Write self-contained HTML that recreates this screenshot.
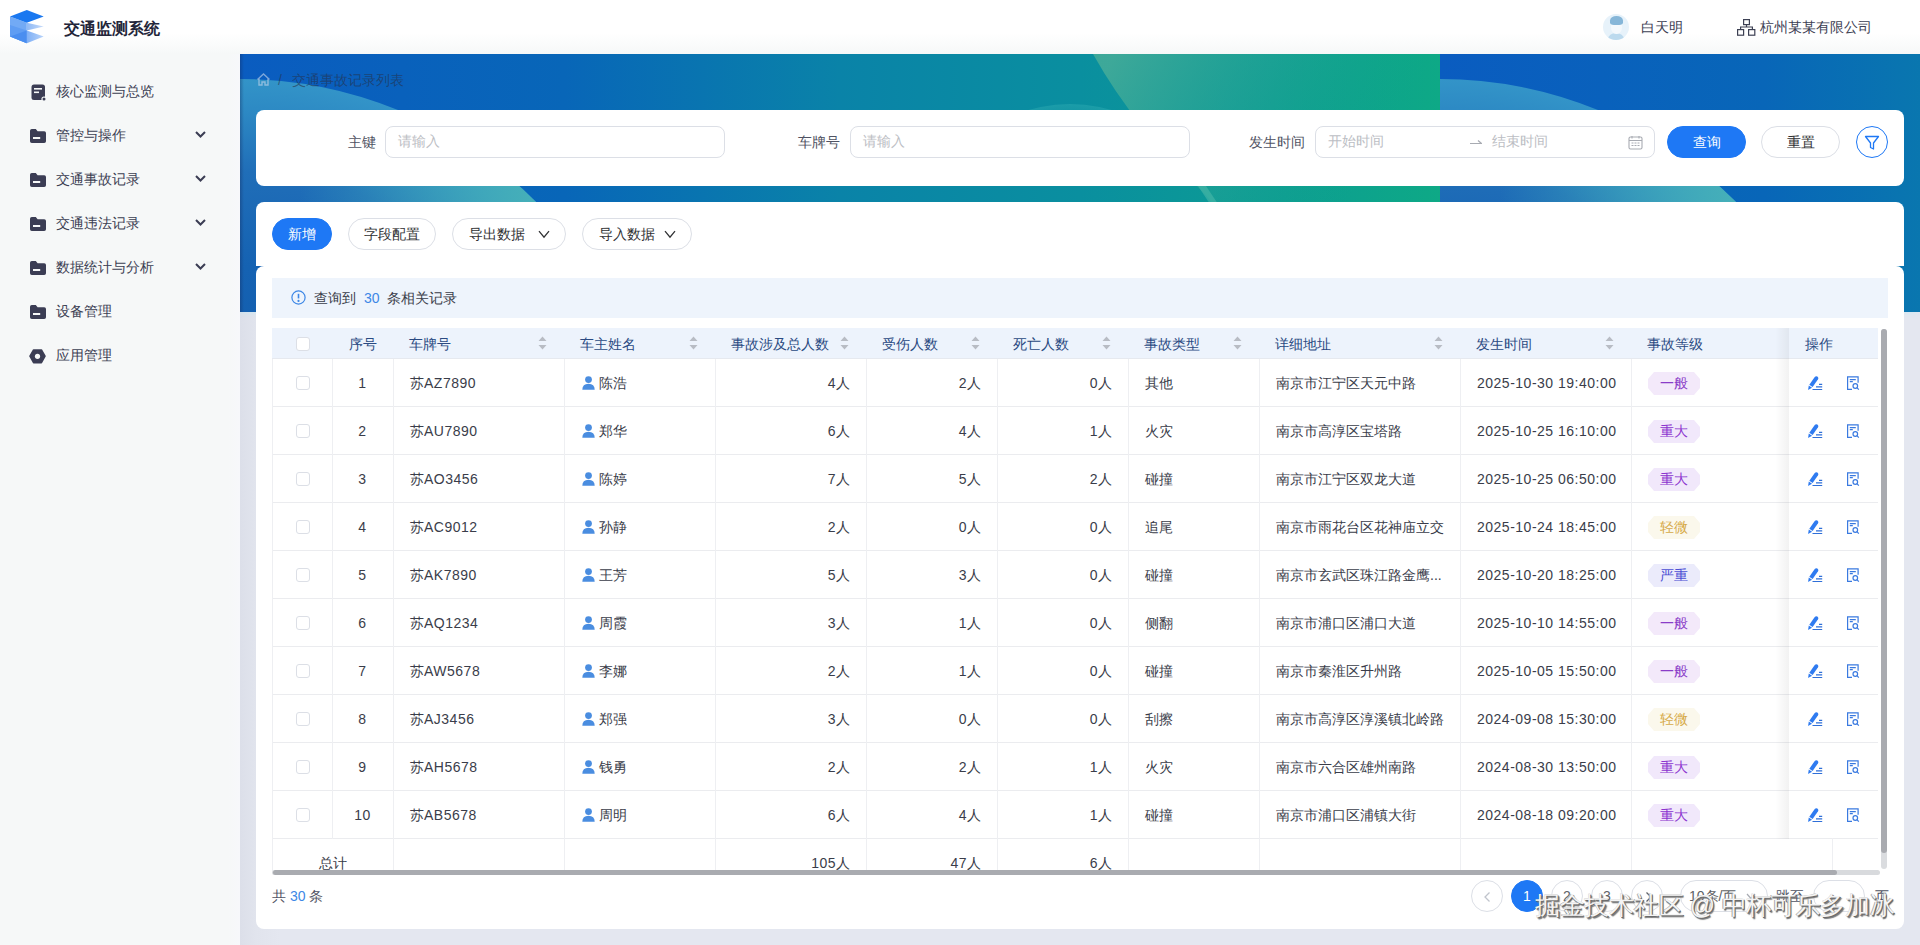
<!DOCTYPE html>
<html><head><meta charset="utf-8">
<style>
*{box-sizing:border-box;margin:0;padding:0}
html,body{width:1920px;height:945px;overflow:hidden}
body{font-family:"Liberation Sans",sans-serif;font-size:14px;color:#303133;background:#e4e8f0;position:relative}
.abs{position:absolute}
/* header */
#hdr{position:absolute;left:0;top:0;width:1920px;height:54px;background:linear-gradient(#fff 0%,#fff 62%,#f6f8f8 100%);z-index:2}
#side{position:absolute;left:0;top:54px;width:240px;height:891px;background:linear-gradient(90deg,#f6f8f8 0,#f6f8f8 228px,#f7f8fb 240px);z-index:1}
.mi{position:absolute;left:0;width:240px;height:44px;color:#3c4053;font-size:14px}
.mi .t{position:absolute;left:56px;top:13px;line-height:18px}
.mi svg.ic{position:absolute;left:30px;top:14px}
.mi svg.ch{position:absolute;left:195px;top:18px}
/* banner */
#banner{position:absolute;left:240px;top:54px;width:1680px;height:258px;overflow:hidden;box-shadow:-3px 0 6px rgba(160,240,255,.35)}
.tile{position:absolute;top:0;width:1200px;height:258px}
.card{position:absolute;background:#fff;border-radius:8px}
.inp{position:absolute;height:32px;border:1px solid #dcdfe6;border-radius:8px;background:#fff;color:#bcbec4;font-size:14px;line-height:29px;padding-left:12px}
.lbl{position:absolute;color:#505363;font-size:14px;line-height:20px;text-align:right}
.btn{position:absolute;height:32px;border-radius:16px;border:1px solid #dcdfe6;background:#fff;color:#303133;font-size:14px;line-height:30px;text-align:center}
.btn.pri{background:#1e78f5;border-color:#1e78f5;color:#fff}
.cb{position:absolute;width:14px;height:14px;border:1px solid #dcdfe6;border-radius:3px;background:#fff}
.th{position:absolute;height:30px;line-height:32px;color:#2a4a82;font-size:14px;white-space:nowrap}
.td{position:absolute;height:48px;line-height:48px;color:#3a3d4a;font-size:14px;white-space:nowrap}
.td.sum{height:32px;line-height:48px}
.rowline{position:absolute;left:272px;width:1608px;height:1px;background:#ebecef}
.vline{position:absolute;width:1px;background:#eeeff2}
.tag{position:absolute;width:52px;height:23px;border-radius:4px;clip-path:polygon(6px 0,46px 0,52px 7px,52px 16px,46px 23px,6px 23px,0 16px,0 7px);font-size:14px;line-height:23px;text-align:center}
.pg{position:absolute;top:880px;width:32px;height:32px;border-radius:16px;border:1px solid #dcdfe6;background:#fff;color:#606266;text-align:center;line-height:30px;font-size:14px}
.wm{font-size:25px;line-height:30px;color:#f4f4f4;white-space:nowrap;text-shadow:1px 1px 0 #6a6a6a,1.5px 1.5px 1px #777,-0.5px -0.5px 0 #aaa}
.n{letter-spacing:.5px}
</style></head><body>
<div id="hdr">
  <svg class="abs" style="left:0;top:0" width="50" height="50" viewBox="0 0 50 50">
    <defs>
    <linearGradient id="lg1" x1="27" y1="0" x2="44" y2="0" gradientUnits="userSpaceOnUse"><stop offset="0" stop-color="#8fbaf6"/><stop offset="1" stop-color="#c9dcf9"/></linearGradient>
    <linearGradient id="lg2" x1="27" y1="0" x2="44" y2="0" gradientUnits="userSpaceOnUse"><stop offset="0" stop-color="#7fb0f6"/><stop offset="1" stop-color="#b8d3fa"/></linearGradient>
    </defs>
    <polygon points="10,16.4 26.8,22.7 26.8,43.2 10,36.4" fill="#72aaf5"/>
    <polygon points="10,25 26.8,30.5 26.8,43.2 10,36.4" fill="#5f9df3"/>
    <polygon points="10,36.4 26.8,30.5 26.8,43.2" fill="#4a8ef0"/>
    <polygon points="26.8,22.7 43.7,26.4 26.8,30.5" fill="url(#lg1)"/>
    <polygon points="26.8,30.5 43.7,36.4 26.8,43.2" fill="url(#lg2)"/>
    <polygon points="10,16.4 26.8,10 43.7,16.4 26.8,22.7" fill="#1a78f0"/>
  </svg>
  <div class="abs" style="left:64px;top:18px;font-size:16px;font-weight:bold;color:#23263a;line-height:22px">交通监测系统</div>
  <div class="abs" style="left:1603px;top:14px;width:26px;height:26px;border-radius:50%;background:#e7f2fa;overflow:hidden">
    <div class="abs" style="left:5px;top:19px;width:16px;height:12px;border-radius:50% 50% 0 0;background:#bcdaee"></div>
    <div class="abs" style="left:8px;top:5px;width:11px;height:15px;border-radius:45%;background:#f3f8fc"></div>
    <div class="abs" style="left:6.5px;top:2px;width:13px;height:9px;border-radius:50% 50% 30% 30%;background:#86b6d8"></div>
  </div>
  <div class="abs" style="left:1641px;top:17px;line-height:20px;color:#3c4053">白天明</div>
  <svg class="abs" style="left:1737px;top:19px" width="19" height="17" viewBox="0 0 19 17" fill="none" stroke="#3c4053" stroke-width="1.2">
    <rect x="6.6" y="0.6" width="5.8" height="5"/><rect x="0.6" y="10.6" width="6" height="5.6"/><rect x="11.6" y="10.6" width="6.2" height="5.6"/>
    <path d="M9.5 5.6v2.4M3.6 10.6V8h11.8v2.6"/>
  </svg>
  <div class="abs" style="left:1760px;top:17px;line-height:20px;color:#3c4053">杭州某某有限公司</div>
</div>

<div id="side">
<div class="mi" style="top:15px"><svg class="ic" style="left:31px;top:15px" width="15" height="17" viewBox="0 0 15 17"><rect x="0.5" y="0.5" width="13.5" height="15.5" rx="2.5" fill="#3b3d54"/><rect x="3" y="4" width="8" height="1.6" fill="#f6f8f8"/><rect x="3" y="7.5" width="5" height="1.6" fill="#f6f8f8"/><circle cx="13" cy="15" r="2.6" fill="#f6f8f8"/><circle cx="13" cy="15" r="1.5" fill="#3b3d54"/></svg><span class="t">核心监测与总览</span></div>
<div class="mi" style="top:59px"><svg class="ic" style="top:16px" width="16" height="14" viewBox="0 0 16 14"><path d="M0 1.8Q0 0 1.8 0H5.8L7.6 2.2H14.2Q16 2.2 16 4V12.2Q16 14 14.2 14H1.8Q0 14 0 12.2Z" fill="#3b3d54"/><rect x="3" y="8" width="7.2" height="2" fill="#f6f8f8"/></svg><span class="t">管控与操作</span><svg class="ch" width="11" height="7" viewBox="0 0 11 7" fill="none" stroke="#3b3d54" stroke-width="2"><path d="M1 1l4.5 4.5L10 1"/></svg></div>
<div class="mi" style="top:103px"><svg class="ic" style="top:16px" width="16" height="14" viewBox="0 0 16 14"><path d="M0 1.8Q0 0 1.8 0H5.8L7.6 2.2H14.2Q16 2.2 16 4V12.2Q16 14 14.2 14H1.8Q0 14 0 12.2Z" fill="#3b3d54"/><rect x="3" y="8" width="7.2" height="2" fill="#f6f8f8"/></svg><span class="t">交通事故记录</span><svg class="ch" width="11" height="7" viewBox="0 0 11 7" fill="none" stroke="#3b3d54" stroke-width="2"><path d="M1 1l4.5 4.5L10 1"/></svg></div>
<div class="mi" style="top:147px"><svg class="ic" style="top:16px" width="16" height="14" viewBox="0 0 16 14"><path d="M0 1.8Q0 0 1.8 0H5.8L7.6 2.2H14.2Q16 2.2 16 4V12.2Q16 14 14.2 14H1.8Q0 14 0 12.2Z" fill="#3b3d54"/><rect x="3" y="8" width="7.2" height="2" fill="#f6f8f8"/></svg><span class="t">交通违法记录</span><svg class="ch" width="11" height="7" viewBox="0 0 11 7" fill="none" stroke="#3b3d54" stroke-width="2"><path d="M1 1l4.5 4.5L10 1"/></svg></div>
<div class="mi" style="top:191px"><svg class="ic" style="top:16px" width="16" height="14" viewBox="0 0 16 14"><path d="M0 1.8Q0 0 1.8 0H5.8L7.6 2.2H14.2Q16 2.2 16 4V12.2Q16 14 14.2 14H1.8Q0 14 0 12.2Z" fill="#3b3d54"/><rect x="3" y="8" width="7.2" height="2" fill="#f6f8f8"/></svg><span class="t">数据统计与分析</span><svg class="ch" width="11" height="7" viewBox="0 0 11 7" fill="none" stroke="#3b3d54" stroke-width="2"><path d="M1 1l4.5 4.5L10 1"/></svg></div>
<div class="mi" style="top:235px"><svg class="ic" style="top:16px" width="16" height="14" viewBox="0 0 16 14"><path d="M0 1.8Q0 0 1.8 0H5.8L7.6 2.2H14.2Q16 2.2 16 4V12.2Q16 14 14.2 14H1.8Q0 14 0 12.2Z" fill="#3b3d54"/><rect x="3" y="8" width="7.2" height="2" fill="#f6f8f8"/></svg><span class="t">设备管理</span></div>
<div class="mi" style="top:279px"><svg class="ic" style="left:29px;top:16px" width="17" height="15" viewBox="0 0 17 15"><path d="M1 7.2L4.6 1H12.4L16 7.2L12.4 13.6H4.6Z" fill="#3b3d54" stroke="#3b3d54" stroke-width="1.6" stroke-linejoin="round"/><circle cx="8.5" cy="7.3" r="2.6" fill="#f6f8f8"/></svg><span class="t">应用管理</span></div>
</div>

<div class="abs" style="left:240px;top:54px;width:1680px;height:891px;background:linear-gradient(90deg,#dcdfe9 0,#e1e4ed 16px,#e4e7f0 40px)"></div>
<div id="banner">
  <div class="tile" style="left:0"><svg class="abs" style="left:0;top:0" width="1200" height="258" viewBox="0 0 1200 258">
<defs>
<linearGradient id="gba" x1="0" y1="0" x2="1200" y2="0" gradientUnits="userSpaceOnUse">
<stop offset="0" stop-color="#0a5cc0"/><stop offset="0.27" stop-color="#0866b8"/><stop offset="0.5" stop-color="#0a83a8"/><stop offset="0.7" stop-color="#0a8f9f"/><stop offset="0.86" stop-color="#0c9c93"/><stop offset="1" stop-color="#0ea986"/>
</linearGradient>
<radialGradient id="gca" cx="0" cy="443" r="418" gradientUnits="userSpaceOnUse">
<stop offset="0" stop-color="#1058aa"/><stop offset="0.55" stop-color="#1562b2"/><stop offset="0.78" stop-color="#206eb8"/><stop offset="0.93" stop-color="#2d8ac4"/><stop offset="1" stop-color="#3394c8"/>
</radialGradient>
<linearGradient id="gta" x1="60" y1="0" x2="300" y2="0" gradientUnits="userSpaceOnUse">
<stop offset="0" stop-color="#40b0b8" stop-opacity="0"/><stop offset="1" stop-color="#46b0b8" stop-opacity="1"/>
</linearGradient>
<radialGradient id="gsa" cx="830" cy="200" r="150" gradientUnits="userSpaceOnUse">
<stop offset="0.85" stop-color="#2aa4ae" stop-opacity="0"/><stop offset="1" stop-color="#2aa8b0" stop-opacity=".55"/>
</radialGradient>
<linearGradient id="gga" x1="870" y1="10" x2="1110" y2="150" gradientUnits="userSpaceOnUse">
<stop offset="0" stop-color="#4aae98" stop-opacity=".8"/><stop offset="0.5" stop-color="#30a895" stop-opacity=".4"/><stop offset="1" stop-color="#10a986" stop-opacity="0"/>
</linearGradient>
<clipPath id="cta"><rect x="0" y="0" width="1200" height="60"/></clipPath><clipPath id="cca"><circle cx="0" cy="443" r="418"/></clipPath>
</defs>
<rect width="1200" height="258" fill="url(#gba)"/>
<circle cx="0" cy="443" r="418" fill="url(#gca)"/>
<rect x="0" y="90" width="300" height="168" fill="url(#gta)" clip-path="url(#cca)"/>
<circle cx="830" cy="200" r="150" fill="url(#gsa)" clip-path="url(#cta)"/>
<path d="M853 0 Q895 75 965 140 Q1010 200 1060 258 L1200 258 L1200 0Z" fill="url(#gga)"/><path d="M958 132 L966 132 L978 150 L970 150Z" fill="#5cc0b0" opacity=".45"/>
</svg></div>
  <div class="abs" style="left:0;top:0;width:4px;height:258px;background:linear-gradient(90deg,rgba(20,40,90,.35),rgba(20,40,90,0));z-index:1"></div>
  <div class="tile" style="left:1200px"><svg class="abs" style="left:0;top:0" width="1200" height="258" viewBox="0 0 1200 258">
<defs>
<linearGradient id="gbb" x1="0" y1="0" x2="1200" y2="0" gradientUnits="userSpaceOnUse">
<stop offset="0" stop-color="#0a5cc0"/><stop offset="0.27" stop-color="#0866b8"/><stop offset="0.5" stop-color="#0a83a8"/><stop offset="0.7" stop-color="#0a8f9f"/><stop offset="0.86" stop-color="#0c9c93"/><stop offset="1" stop-color="#0ea986"/>
</linearGradient>
<radialGradient id="gcb" cx="0" cy="443" r="418" gradientUnits="userSpaceOnUse">
<stop offset="0" stop-color="#1058aa"/><stop offset="0.55" stop-color="#1562b2"/><stop offset="0.78" stop-color="#206eb8"/><stop offset="0.93" stop-color="#2d8ac4"/><stop offset="1" stop-color="#3394c8"/>
</radialGradient>
<linearGradient id="gtb" x1="60" y1="0" x2="300" y2="0" gradientUnits="userSpaceOnUse">
<stop offset="0" stop-color="#40b0b8" stop-opacity="0"/><stop offset="1" stop-color="#46b0b8" stop-opacity="1"/>
</linearGradient>
<radialGradient id="gsb" cx="830" cy="200" r="150" gradientUnits="userSpaceOnUse">
<stop offset="0.85" stop-color="#2aa4ae" stop-opacity="0"/><stop offset="1" stop-color="#2aa8b0" stop-opacity=".55"/>
</radialGradient>
<linearGradient id="ggb" x1="870" y1="10" x2="1110" y2="150" gradientUnits="userSpaceOnUse">
<stop offset="0" stop-color="#4aae98" stop-opacity=".8"/><stop offset="0.5" stop-color="#30a895" stop-opacity=".4"/><stop offset="1" stop-color="#10a986" stop-opacity="0"/>
</linearGradient>
<clipPath id="ctb"><rect x="0" y="0" width="1200" height="60"/></clipPath><clipPath id="ccb"><circle cx="0" cy="443" r="418"/></clipPath>
</defs>
<rect width="1200" height="258" fill="url(#gbb)"/>
<circle cx="0" cy="443" r="418" fill="url(#gcb)"/>
<rect x="0" y="90" width="300" height="168" fill="url(#gtb)" clip-path="url(#ccb)"/>
<circle cx="830" cy="200" r="150" fill="url(#gsb)" clip-path="url(#ctb)"/>
<path d="M853 0 Q895 75 965 140 Q1010 200 1060 258 L1200 258 L1200 0Z" fill="url(#ggb)"/><path d="M958 132 L966 132 L978 150 L970 150Z" fill="#5cc0b0" opacity=".45"/>
</svg></div>
</div>

<!-- breadcrumb -->
<div class="abs" style="left:256px;top:70px;height:20px;color:rgba(40,44,60,.55);line-height:20px;font-size:14px">
  <svg class="abs" style="left:0;top:2px" width="15" height="15" viewBox="0 0 15 15" fill="none" stroke="rgba(200,215,235,.6)" stroke-width="1.4"><path d="M1.5 7.5L7.5 2l6 5.5M3 6.5V13h3v-3h3v3h3V6.5"/></svg>
  <span class="abs" style="left:22px;top:0">/</span>
  <span class="abs" style="left:36px;top:0;white-space:nowrap">交通事故记录列表</span>
</div>

<!-- search card -->
<div class="card" style="left:256px;top:110px;width:1648px;height:76px"></div>
<div class="lbl" style="left:300px;top:132px;width:76px">主键</div>
<div class="inp" style="left:385px;top:126px;width:340px">请输入</div>
<div class="lbl" style="left:760px;top:132px;width:80px">车牌号</div>
<div class="inp" style="left:850px;top:126px;width:340px">请输入</div>
<div class="lbl" style="left:1220px;top:132px;width:85px">发生时间</div>
<div class="inp" style="left:1315px;top:126px;width:340px">
  <span class="abs" style="left:12px;top:0">开始时间</span>
  <svg class="abs" style="left:153px;top:11px" width="14" height="8" viewBox="0 0 14 8" fill="none" stroke="#a8abb2" stroke-width="1.2"><path d="M1 5.5h12M9 2.5l3.5 3"/></svg>
  <span class="abs" style="left:176px;top:0">结束时间</span>
  <svg class="abs" style="left:312px;top:8px" width="15" height="15" viewBox="0 0 15 15" fill="none" stroke="#a8abb2" stroke-width="1.1"><rect x="1" y="2" width="13" height="12" rx="1.5"/><path d="M1 5.5h13M4 1v2.5M11 1v2.5"/><path d="M3.5 8h2M6.5 8h2M9.5 8h2M3.5 10.5h2M6.5 10.5h2M9.5 10.5h2" stroke-width="1"/></svg>
</div>
<div class="btn pri" style="left:1667px;top:126px;width:79px">查询</div>
<div class="btn" style="left:1761px;top:126px;width:79px">重置</div>
<div class="abs" style="left:1856px;top:126px;width:32px;height:32px;border-radius:50%;border:1px solid #1e78f5">
  <svg class="abs" style="left:7px;top:8px" width="16" height="16" viewBox="0 0 16 16" fill="none" stroke="#1e78f5" stroke-width="1.3" stroke-linejoin="round"><path d="M1.5 1.5h13L9.5 8v6l-3-1.5V8Z"/></svg>
</div>

<!-- main card -->
<div class="card" style="left:256px;top:202px;width:1648px;height:64px;border-radius:8px 8px 0 0"></div>
<div class="card" style="left:256px;top:266px;width:1648px;height:663px;border-radius:8px"></div>
<div class="btn pri" style="left:272px;top:218px;width:60px">新增</div>
<div class="btn" style="left:348px;top:218px;width:88px">字段配置</div>
<div class="btn" style="left:452px;top:218px;width:114px;text-align:left;padding-left:16px">导出数据<svg class="abs" style="left:85px;top:11px" width="12" height="9" viewBox="0 0 12 9" fill="none" stroke="#303133" stroke-width="1.3"><path d="M1 1.2l5 6L11 1.2"/></svg></div>
<div class="btn" style="left:582px;top:218px;width:110px;text-align:left;padding-left:16px">导入数据<svg class="abs" style="left:81px;top:11px" width="12" height="9" viewBox="0 0 12 9" fill="none" stroke="#303133" stroke-width="1.3"><path d="M1 1.2l5 6L11 1.2"/></svg></div>
<div class="abs" style="left:272px;top:278px;width:1616px;height:40px;background:#eef4fc"></div>
<svg class="abs" style="left:291px;top:290px" width="15" height="15" viewBox="0 0 15 15" fill="none" stroke="#3d87e6" stroke-width="1.2"><circle cx="7.5" cy="7.5" r="6.6"/><path d="M7.5 3.8v4.6" stroke-width="1.6"/><circle cx="7.5" cy="10.9" r=".5" fill="#3d87e6"/></svg>
<div class="abs" style="left:314px;top:288px;line-height:20px;color:#3a3d4a;white-space:nowrap">查询到 <span style="color:#3d87e6;margin:0 4px">30</span> 条相关记录</div>
<div class="abs" style="left:272px;top:328px;width:1608px;height:30px;background:#edf3fc"></div>
<div class="rowline" style="top:358px;background:#e6e9ef"></div>
<div class="cb" style="left:296px;top:337px"></div>
<div class="th" style="left:332px;top:328px;width:61px;text-align:center">序号</div>
<div class="th" style="left:409px;top:328px">车牌号</div>
<svg class="abs" style="left:538px;top:336px" width="9" height="14" viewBox="0 0 9 14"><path d="M4.5 0.5L8.5 5H0.5Z M4.5 13.5L8.5 9H0.5Z" fill="#b8bcc4"/></svg>
<div class="th" style="left:580px;top:328px">车主姓名</div>
<svg class="abs" style="left:689px;top:336px" width="9" height="14" viewBox="0 0 9 14"><path d="M4.5 0.5L8.5 5H0.5Z M4.5 13.5L8.5 9H0.5Z" fill="#b8bcc4"/></svg>
<div class="th" style="left:731px;top:328px">事故涉及总人数</div>
<svg class="abs" style="left:840px;top:336px" width="9" height="14" viewBox="0 0 9 14"><path d="M4.5 0.5L8.5 5H0.5Z M4.5 13.5L8.5 9H0.5Z" fill="#b8bcc4"/></svg>
<div class="th" style="left:882px;top:328px">受伤人数</div>
<svg class="abs" style="left:971px;top:336px" width="9" height="14" viewBox="0 0 9 14"><path d="M4.5 0.5L8.5 5H0.5Z M4.5 13.5L8.5 9H0.5Z" fill="#b8bcc4"/></svg>
<div class="th" style="left:1013px;top:328px">死亡人数</div>
<svg class="abs" style="left:1102px;top:336px" width="9" height="14" viewBox="0 0 9 14"><path d="M4.5 0.5L8.5 5H0.5Z M4.5 13.5L8.5 9H0.5Z" fill="#b8bcc4"/></svg>
<div class="th" style="left:1144px;top:328px">事故类型</div>
<svg class="abs" style="left:1233px;top:336px" width="9" height="14" viewBox="0 0 9 14"><path d="M4.5 0.5L8.5 5H0.5Z M4.5 13.5L8.5 9H0.5Z" fill="#b8bcc4"/></svg>
<div class="th" style="left:1275px;top:328px">详细地址</div>
<svg class="abs" style="left:1434px;top:336px" width="9" height="14" viewBox="0 0 9 14"><path d="M4.5 0.5L8.5 5H0.5Z M4.5 13.5L8.5 9H0.5Z" fill="#b8bcc4"/></svg>
<div class="th" style="left:1476px;top:328px">发生时间</div>
<svg class="abs" style="left:1605px;top:336px" width="9" height="14" viewBox="0 0 9 14"><path d="M4.5 0.5L8.5 5H0.5Z M4.5 13.5L8.5 9H0.5Z" fill="#b8bcc4"/></svg>
<div class="th" style="left:1647px;top:328px">事故等级</div>
<div class="th" style="left:1805px;top:328px">操作</div>
<div class="rowline" style="top:406px"></div>
<div class="cb" style="left:296px;top:376px"></div>
<div class="td" style="left:332px;top:359px;width:61px;text-align:center"><span class="n">1</span></div>
<div class="td" style="left:410px;top:359px">苏<span class="n">AZ7890</span></div>
<svg class="abs" style="left:582px;top:376px" width="13" height="14" viewBox="0 0 13 14"><circle cx="6.5" cy="3.6" r="3.4" fill="#4a8de0"/><path d="M0.3 13.8Q0.3 7.8 6.5 7.8Q12.7 7.8 12.7 13.8Z" fill="#4a8de0"/></svg>
<div class="td" style="left:599px;top:359px">陈浩</div>
<div class="td" style="left:715px;top:359px;width:135px;text-align:right"><span class="n">4</span>人</div>
<div class="td" style="left:866px;top:359px;width:115px;text-align:right"><span class="n">2</span>人</div>
<div class="td" style="left:997px;top:359px;width:115px;text-align:right"><span class="n">0</span>人</div>
<div class="td" style="left:1145px;top:359px">其他</div>
<div class="td" style="left:1276px;top:359px">南京市江宁区天元中路</div>
<div class="td" style="left:1477px;top:359px"><span class="n">2025-10-30 19:40:00</span></div>
<div class="tag" style="left:1648px;top:372px;background:#f3e9fa;color:#8a3cc8">一般</div>
<svg class="abs" style="left:1807px;top:376px" width="16" height="15" viewBox="0 0 16 15"><path d="M5.61 11.05L2.33 8.77L7.74 0.98Q8.9 -0.3 10.3 0.5Q11.9 1.6 11.02 3.26Z" fill="#2f7bf0"/><path d="M5.04 11.87L1.76 9.59L1.1 13.9Z" fill="#2f7bf0"/><path d="M12 8.3h3.2M9 10.8h6.2M5.5 13.5h9.7" stroke="#2f6fd8" stroke-width="1.2"/></svg>
<svg class="abs" style="left:1846px;top:376px" width="14" height="15" viewBox="0 0 14 15" fill="none" stroke="#3a7ae0" stroke-width="1.2"><path d="M6 13.4H1.6V0.9H12.1V6.8"/><path d="M3.8 3.6h6M3.8 5.6h3"/><circle cx="9.3" cy="10" r="2.3"/><path d="M10.9 11.7l1.9 1.9"/></svg>
<div class="rowline" style="top:454px"></div>
<div class="cb" style="left:296px;top:424px"></div>
<div class="td" style="left:332px;top:407px;width:61px;text-align:center"><span class="n">2</span></div>
<div class="td" style="left:410px;top:407px">苏<span class="n">AU7890</span></div>
<svg class="abs" style="left:582px;top:424px" width="13" height="14" viewBox="0 0 13 14"><circle cx="6.5" cy="3.6" r="3.4" fill="#4a8de0"/><path d="M0.3 13.8Q0.3 7.8 6.5 7.8Q12.7 7.8 12.7 13.8Z" fill="#4a8de0"/></svg>
<div class="td" style="left:599px;top:407px">郑华</div>
<div class="td" style="left:715px;top:407px;width:135px;text-align:right"><span class="n">6</span>人</div>
<div class="td" style="left:866px;top:407px;width:115px;text-align:right"><span class="n">4</span>人</div>
<div class="td" style="left:997px;top:407px;width:115px;text-align:right"><span class="n">1</span>人</div>
<div class="td" style="left:1145px;top:407px">火灾</div>
<div class="td" style="left:1276px;top:407px">南京市高淳区宝塔路</div>
<div class="td" style="left:1477px;top:407px"><span class="n">2025-10-25 16:10:00</span></div>
<div class="tag" style="left:1648px;top:420px;background:#f1e8fb;color:#8c34cf">重大</div>
<svg class="abs" style="left:1807px;top:424px" width="16" height="15" viewBox="0 0 16 15"><path d="M5.61 11.05L2.33 8.77L7.74 0.98Q8.9 -0.3 10.3 0.5Q11.9 1.6 11.02 3.26Z" fill="#2f7bf0"/><path d="M5.04 11.87L1.76 9.59L1.1 13.9Z" fill="#2f7bf0"/><path d="M12 8.3h3.2M9 10.8h6.2M5.5 13.5h9.7" stroke="#2f6fd8" stroke-width="1.2"/></svg>
<svg class="abs" style="left:1846px;top:424px" width="14" height="15" viewBox="0 0 14 15" fill="none" stroke="#3a7ae0" stroke-width="1.2"><path d="M6 13.4H1.6V0.9H12.1V6.8"/><path d="M3.8 3.6h6M3.8 5.6h3"/><circle cx="9.3" cy="10" r="2.3"/><path d="M10.9 11.7l1.9 1.9"/></svg>
<div class="rowline" style="top:502px"></div>
<div class="cb" style="left:296px;top:472px"></div>
<div class="td" style="left:332px;top:455px;width:61px;text-align:center"><span class="n">3</span></div>
<div class="td" style="left:410px;top:455px">苏<span class="n">AO3456</span></div>
<svg class="abs" style="left:582px;top:472px" width="13" height="14" viewBox="0 0 13 14"><circle cx="6.5" cy="3.6" r="3.4" fill="#4a8de0"/><path d="M0.3 13.8Q0.3 7.8 6.5 7.8Q12.7 7.8 12.7 13.8Z" fill="#4a8de0"/></svg>
<div class="td" style="left:599px;top:455px">陈婷</div>
<div class="td" style="left:715px;top:455px;width:135px;text-align:right"><span class="n">7</span>人</div>
<div class="td" style="left:866px;top:455px;width:115px;text-align:right"><span class="n">5</span>人</div>
<div class="td" style="left:997px;top:455px;width:115px;text-align:right"><span class="n">2</span>人</div>
<div class="td" style="left:1145px;top:455px">碰撞</div>
<div class="td" style="left:1276px;top:455px">南京市江宁区双龙大道</div>
<div class="td" style="left:1477px;top:455px"><span class="n">2025-10-25 06:50:00</span></div>
<div class="tag" style="left:1648px;top:468px;background:#f1e8fb;color:#8c34cf">重大</div>
<svg class="abs" style="left:1807px;top:472px" width="16" height="15" viewBox="0 0 16 15"><path d="M5.61 11.05L2.33 8.77L7.74 0.98Q8.9 -0.3 10.3 0.5Q11.9 1.6 11.02 3.26Z" fill="#2f7bf0"/><path d="M5.04 11.87L1.76 9.59L1.1 13.9Z" fill="#2f7bf0"/><path d="M12 8.3h3.2M9 10.8h6.2M5.5 13.5h9.7" stroke="#2f6fd8" stroke-width="1.2"/></svg>
<svg class="abs" style="left:1846px;top:472px" width="14" height="15" viewBox="0 0 14 15" fill="none" stroke="#3a7ae0" stroke-width="1.2"><path d="M6 13.4H1.6V0.9H12.1V6.8"/><path d="M3.8 3.6h6M3.8 5.6h3"/><circle cx="9.3" cy="10" r="2.3"/><path d="M10.9 11.7l1.9 1.9"/></svg>
<div class="rowline" style="top:550px"></div>
<div class="cb" style="left:296px;top:520px"></div>
<div class="td" style="left:332px;top:503px;width:61px;text-align:center"><span class="n">4</span></div>
<div class="td" style="left:410px;top:503px">苏<span class="n">AC9012</span></div>
<svg class="abs" style="left:582px;top:520px" width="13" height="14" viewBox="0 0 13 14"><circle cx="6.5" cy="3.6" r="3.4" fill="#4a8de0"/><path d="M0.3 13.8Q0.3 7.8 6.5 7.8Q12.7 7.8 12.7 13.8Z" fill="#4a8de0"/></svg>
<div class="td" style="left:599px;top:503px">孙静</div>
<div class="td" style="left:715px;top:503px;width:135px;text-align:right"><span class="n">2</span>人</div>
<div class="td" style="left:866px;top:503px;width:115px;text-align:right"><span class="n">0</span>人</div>
<div class="td" style="left:997px;top:503px;width:115px;text-align:right"><span class="n">0</span>人</div>
<div class="td" style="left:1145px;top:503px">追尾</div>
<div class="td" style="left:1276px;top:503px">南京市雨花台区花神庙立交</div>
<div class="td" style="left:1477px;top:503px"><span class="n">2025-10-24 18:45:00</span></div>
<div class="tag" style="left:1648px;top:516px;background:#fbf8ec;color:#d6a946">轻微</div>
<svg class="abs" style="left:1807px;top:520px" width="16" height="15" viewBox="0 0 16 15"><path d="M5.61 11.05L2.33 8.77L7.74 0.98Q8.9 -0.3 10.3 0.5Q11.9 1.6 11.02 3.26Z" fill="#2f7bf0"/><path d="M5.04 11.87L1.76 9.59L1.1 13.9Z" fill="#2f7bf0"/><path d="M12 8.3h3.2M9 10.8h6.2M5.5 13.5h9.7" stroke="#2f6fd8" stroke-width="1.2"/></svg>
<svg class="abs" style="left:1846px;top:520px" width="14" height="15" viewBox="0 0 14 15" fill="none" stroke="#3a7ae0" stroke-width="1.2"><path d="M6 13.4H1.6V0.9H12.1V6.8"/><path d="M3.8 3.6h6M3.8 5.6h3"/><circle cx="9.3" cy="10" r="2.3"/><path d="M10.9 11.7l1.9 1.9"/></svg>
<div class="rowline" style="top:598px"></div>
<div class="cb" style="left:296px;top:568px"></div>
<div class="td" style="left:332px;top:551px;width:61px;text-align:center"><span class="n">5</span></div>
<div class="td" style="left:410px;top:551px">苏<span class="n">AK7890</span></div>
<svg class="abs" style="left:582px;top:568px" width="13" height="14" viewBox="0 0 13 14"><circle cx="6.5" cy="3.6" r="3.4" fill="#4a8de0"/><path d="M0.3 13.8Q0.3 7.8 6.5 7.8Q12.7 7.8 12.7 13.8Z" fill="#4a8de0"/></svg>
<div class="td" style="left:599px;top:551px">王芳</div>
<div class="td" style="left:715px;top:551px;width:135px;text-align:right"><span class="n">5</span>人</div>
<div class="td" style="left:866px;top:551px;width:115px;text-align:right"><span class="n">3</span>人</div>
<div class="td" style="left:997px;top:551px;width:115px;text-align:right"><span class="n">0</span>人</div>
<div class="td" style="left:1145px;top:551px">碰撞</div>
<div class="td" style="left:1276px;top:551px">南京市玄武区珠江路金鹰...</div>
<div class="td" style="left:1477px;top:551px"><span class="n">2025-10-20 18:25:00</span></div>
<div class="tag" style="left:1648px;top:564px;background:#ebebfb;color:#4b4fd4">严重</div>
<svg class="abs" style="left:1807px;top:568px" width="16" height="15" viewBox="0 0 16 15"><path d="M5.61 11.05L2.33 8.77L7.74 0.98Q8.9 -0.3 10.3 0.5Q11.9 1.6 11.02 3.26Z" fill="#2f7bf0"/><path d="M5.04 11.87L1.76 9.59L1.1 13.9Z" fill="#2f7bf0"/><path d="M12 8.3h3.2M9 10.8h6.2M5.5 13.5h9.7" stroke="#2f6fd8" stroke-width="1.2"/></svg>
<svg class="abs" style="left:1846px;top:568px" width="14" height="15" viewBox="0 0 14 15" fill="none" stroke="#3a7ae0" stroke-width="1.2"><path d="M6 13.4H1.6V0.9H12.1V6.8"/><path d="M3.8 3.6h6M3.8 5.6h3"/><circle cx="9.3" cy="10" r="2.3"/><path d="M10.9 11.7l1.9 1.9"/></svg>
<div class="rowline" style="top:646px"></div>
<div class="cb" style="left:296px;top:616px"></div>
<div class="td" style="left:332px;top:599px;width:61px;text-align:center"><span class="n">6</span></div>
<div class="td" style="left:410px;top:599px">苏<span class="n">AQ1234</span></div>
<svg class="abs" style="left:582px;top:616px" width="13" height="14" viewBox="0 0 13 14"><circle cx="6.5" cy="3.6" r="3.4" fill="#4a8de0"/><path d="M0.3 13.8Q0.3 7.8 6.5 7.8Q12.7 7.8 12.7 13.8Z" fill="#4a8de0"/></svg>
<div class="td" style="left:599px;top:599px">周霞</div>
<div class="td" style="left:715px;top:599px;width:135px;text-align:right"><span class="n">3</span>人</div>
<div class="td" style="left:866px;top:599px;width:115px;text-align:right"><span class="n">1</span>人</div>
<div class="td" style="left:997px;top:599px;width:115px;text-align:right"><span class="n">0</span>人</div>
<div class="td" style="left:1145px;top:599px">侧翻</div>
<div class="td" style="left:1276px;top:599px">南京市浦口区浦口大道</div>
<div class="td" style="left:1477px;top:599px"><span class="n">2025-10-10 14:55:00</span></div>
<div class="tag" style="left:1648px;top:612px;background:#f3e9fa;color:#8a3cc8">一般</div>
<svg class="abs" style="left:1807px;top:616px" width="16" height="15" viewBox="0 0 16 15"><path d="M5.61 11.05L2.33 8.77L7.74 0.98Q8.9 -0.3 10.3 0.5Q11.9 1.6 11.02 3.26Z" fill="#2f7bf0"/><path d="M5.04 11.87L1.76 9.59L1.1 13.9Z" fill="#2f7bf0"/><path d="M12 8.3h3.2M9 10.8h6.2M5.5 13.5h9.7" stroke="#2f6fd8" stroke-width="1.2"/></svg>
<svg class="abs" style="left:1846px;top:616px" width="14" height="15" viewBox="0 0 14 15" fill="none" stroke="#3a7ae0" stroke-width="1.2"><path d="M6 13.4H1.6V0.9H12.1V6.8"/><path d="M3.8 3.6h6M3.8 5.6h3"/><circle cx="9.3" cy="10" r="2.3"/><path d="M10.9 11.7l1.9 1.9"/></svg>
<div class="rowline" style="top:694px"></div>
<div class="cb" style="left:296px;top:664px"></div>
<div class="td" style="left:332px;top:647px;width:61px;text-align:center"><span class="n">7</span></div>
<div class="td" style="left:410px;top:647px">苏<span class="n">AW5678</span></div>
<svg class="abs" style="left:582px;top:664px" width="13" height="14" viewBox="0 0 13 14"><circle cx="6.5" cy="3.6" r="3.4" fill="#4a8de0"/><path d="M0.3 13.8Q0.3 7.8 6.5 7.8Q12.7 7.8 12.7 13.8Z" fill="#4a8de0"/></svg>
<div class="td" style="left:599px;top:647px">李娜</div>
<div class="td" style="left:715px;top:647px;width:135px;text-align:right"><span class="n">2</span>人</div>
<div class="td" style="left:866px;top:647px;width:115px;text-align:right"><span class="n">1</span>人</div>
<div class="td" style="left:997px;top:647px;width:115px;text-align:right"><span class="n">0</span>人</div>
<div class="td" style="left:1145px;top:647px">碰撞</div>
<div class="td" style="left:1276px;top:647px">南京市秦淮区升州路</div>
<div class="td" style="left:1477px;top:647px"><span class="n">2025-10-05 15:50:00</span></div>
<div class="tag" style="left:1648px;top:660px;background:#f3e9fa;color:#8a3cc8">一般</div>
<svg class="abs" style="left:1807px;top:664px" width="16" height="15" viewBox="0 0 16 15"><path d="M5.61 11.05L2.33 8.77L7.74 0.98Q8.9 -0.3 10.3 0.5Q11.9 1.6 11.02 3.26Z" fill="#2f7bf0"/><path d="M5.04 11.87L1.76 9.59L1.1 13.9Z" fill="#2f7bf0"/><path d="M12 8.3h3.2M9 10.8h6.2M5.5 13.5h9.7" stroke="#2f6fd8" stroke-width="1.2"/></svg>
<svg class="abs" style="left:1846px;top:664px" width="14" height="15" viewBox="0 0 14 15" fill="none" stroke="#3a7ae0" stroke-width="1.2"><path d="M6 13.4H1.6V0.9H12.1V6.8"/><path d="M3.8 3.6h6M3.8 5.6h3"/><circle cx="9.3" cy="10" r="2.3"/><path d="M10.9 11.7l1.9 1.9"/></svg>
<div class="rowline" style="top:742px"></div>
<div class="cb" style="left:296px;top:712px"></div>
<div class="td" style="left:332px;top:695px;width:61px;text-align:center"><span class="n">8</span></div>
<div class="td" style="left:410px;top:695px">苏<span class="n">AJ3456</span></div>
<svg class="abs" style="left:582px;top:712px" width="13" height="14" viewBox="0 0 13 14"><circle cx="6.5" cy="3.6" r="3.4" fill="#4a8de0"/><path d="M0.3 13.8Q0.3 7.8 6.5 7.8Q12.7 7.8 12.7 13.8Z" fill="#4a8de0"/></svg>
<div class="td" style="left:599px;top:695px">郑强</div>
<div class="td" style="left:715px;top:695px;width:135px;text-align:right"><span class="n">3</span>人</div>
<div class="td" style="left:866px;top:695px;width:115px;text-align:right"><span class="n">0</span>人</div>
<div class="td" style="left:997px;top:695px;width:115px;text-align:right"><span class="n">0</span>人</div>
<div class="td" style="left:1145px;top:695px">刮擦</div>
<div class="td" style="left:1276px;top:695px">南京市高淳区淳溪镇北岭路</div>
<div class="td" style="left:1477px;top:695px"><span class="n">2024-09-08 15:30:00</span></div>
<div class="tag" style="left:1648px;top:708px;background:#fbf8ec;color:#d6a946">轻微</div>
<svg class="abs" style="left:1807px;top:712px" width="16" height="15" viewBox="0 0 16 15"><path d="M5.61 11.05L2.33 8.77L7.74 0.98Q8.9 -0.3 10.3 0.5Q11.9 1.6 11.02 3.26Z" fill="#2f7bf0"/><path d="M5.04 11.87L1.76 9.59L1.1 13.9Z" fill="#2f7bf0"/><path d="M12 8.3h3.2M9 10.8h6.2M5.5 13.5h9.7" stroke="#2f6fd8" stroke-width="1.2"/></svg>
<svg class="abs" style="left:1846px;top:712px" width="14" height="15" viewBox="0 0 14 15" fill="none" stroke="#3a7ae0" stroke-width="1.2"><path d="M6 13.4H1.6V0.9H12.1V6.8"/><path d="M3.8 3.6h6M3.8 5.6h3"/><circle cx="9.3" cy="10" r="2.3"/><path d="M10.9 11.7l1.9 1.9"/></svg>
<div class="rowline" style="top:790px"></div>
<div class="cb" style="left:296px;top:760px"></div>
<div class="td" style="left:332px;top:743px;width:61px;text-align:center"><span class="n">9</span></div>
<div class="td" style="left:410px;top:743px">苏<span class="n">AH5678</span></div>
<svg class="abs" style="left:582px;top:760px" width="13" height="14" viewBox="0 0 13 14"><circle cx="6.5" cy="3.6" r="3.4" fill="#4a8de0"/><path d="M0.3 13.8Q0.3 7.8 6.5 7.8Q12.7 7.8 12.7 13.8Z" fill="#4a8de0"/></svg>
<div class="td" style="left:599px;top:743px">钱勇</div>
<div class="td" style="left:715px;top:743px;width:135px;text-align:right"><span class="n">2</span>人</div>
<div class="td" style="left:866px;top:743px;width:115px;text-align:right"><span class="n">2</span>人</div>
<div class="td" style="left:997px;top:743px;width:115px;text-align:right"><span class="n">1</span>人</div>
<div class="td" style="left:1145px;top:743px">火灾</div>
<div class="td" style="left:1276px;top:743px">南京市六合区雄州南路</div>
<div class="td" style="left:1477px;top:743px"><span class="n">2024-08-30 13:50:00</span></div>
<div class="tag" style="left:1648px;top:756px;background:#f1e8fb;color:#8c34cf">重大</div>
<svg class="abs" style="left:1807px;top:760px" width="16" height="15" viewBox="0 0 16 15"><path d="M5.61 11.05L2.33 8.77L7.74 0.98Q8.9 -0.3 10.3 0.5Q11.9 1.6 11.02 3.26Z" fill="#2f7bf0"/><path d="M5.04 11.87L1.76 9.59L1.1 13.9Z" fill="#2f7bf0"/><path d="M12 8.3h3.2M9 10.8h6.2M5.5 13.5h9.7" stroke="#2f6fd8" stroke-width="1.2"/></svg>
<svg class="abs" style="left:1846px;top:760px" width="14" height="15" viewBox="0 0 14 15" fill="none" stroke="#3a7ae0" stroke-width="1.2"><path d="M6 13.4H1.6V0.9H12.1V6.8"/><path d="M3.8 3.6h6M3.8 5.6h3"/><circle cx="9.3" cy="10" r="2.3"/><path d="M10.9 11.7l1.9 1.9"/></svg>
<div class="rowline" style="top:838px"></div>
<div class="cb" style="left:296px;top:808px"></div>
<div class="td" style="left:332px;top:791px;width:61px;text-align:center"><span class="n">10</span></div>
<div class="td" style="left:410px;top:791px">苏<span class="n">AB5678</span></div>
<svg class="abs" style="left:582px;top:808px" width="13" height="14" viewBox="0 0 13 14"><circle cx="6.5" cy="3.6" r="3.4" fill="#4a8de0"/><path d="M0.3 13.8Q0.3 7.8 6.5 7.8Q12.7 7.8 12.7 13.8Z" fill="#4a8de0"/></svg>
<div class="td" style="left:599px;top:791px">周明</div>
<div class="td" style="left:715px;top:791px;width:135px;text-align:right"><span class="n">6</span>人</div>
<div class="td" style="left:866px;top:791px;width:115px;text-align:right"><span class="n">4</span>人</div>
<div class="td" style="left:997px;top:791px;width:115px;text-align:right"><span class="n">1</span>人</div>
<div class="td" style="left:1145px;top:791px">碰撞</div>
<div class="td" style="left:1276px;top:791px">南京市浦口区浦镇大街</div>
<div class="td" style="left:1477px;top:791px"><span class="n">2024-08-18 09:20:00</span></div>
<div class="tag" style="left:1648px;top:804px;background:#f1e8fb;color:#8c34cf">重大</div>
<svg class="abs" style="left:1807px;top:808px" width="16" height="15" viewBox="0 0 16 15"><path d="M5.61 11.05L2.33 8.77L7.74 0.98Q8.9 -0.3 10.3 0.5Q11.9 1.6 11.02 3.26Z" fill="#2f7bf0"/><path d="M5.04 11.87L1.76 9.59L1.1 13.9Z" fill="#2f7bf0"/><path d="M12 8.3h3.2M9 10.8h6.2M5.5 13.5h9.7" stroke="#2f6fd8" stroke-width="1.2"/></svg>
<svg class="abs" style="left:1846px;top:808px" width="14" height="15" viewBox="0 0 14 15" fill="none" stroke="#3a7ae0" stroke-width="1.2"><path d="M6 13.4H1.6V0.9H12.1V6.8"/><path d="M3.8 3.6h6M3.8 5.6h3"/><circle cx="9.3" cy="10" r="2.3"/><path d="M10.9 11.7l1.9 1.9"/></svg>
<div class="vline" style="left:272px;top:359px;height:480px"></div>
<div class="vline" style="left:332px;top:359px;height:480px"></div>
<div class="vline" style="left:393px;top:359px;height:480px"></div>
<div class="vline" style="left:564px;top:359px;height:480px"></div>
<div class="vline" style="left:715px;top:359px;height:480px"></div>
<div class="vline" style="left:866px;top:359px;height:480px"></div>
<div class="vline" style="left:997px;top:359px;height:480px"></div>
<div class="vline" style="left:1128px;top:359px;height:480px"></div>
<div class="vline" style="left:1259px;top:359px;height:480px"></div>
<div class="vline" style="left:1460px;top:359px;height:480px"></div>
<div class="vline" style="left:1631px;top:359px;height:480px"></div>
<div class="vline" style="left:393px;top:839px;height:32px"></div>
<div class="vline" style="left:564px;top:839px;height:32px"></div>
<div class="vline" style="left:715px;top:839px;height:32px"></div>
<div class="vline" style="left:866px;top:839px;height:32px"></div>
<div class="vline" style="left:997px;top:839px;height:32px"></div>
<div class="vline" style="left:1128px;top:839px;height:32px"></div>
<div class="vline" style="left:1259px;top:839px;height:32px"></div>
<div class="vline" style="left:1460px;top:839px;height:32px"></div>
<div class="vline" style="left:1631px;top:839px;height:32px"></div>
<div class="vline" style="left:272px;top:839px;height:32px"></div>
<div class="td sum" style="left:272px;top:839px;width:121px;text-align:center">总计</div>
<div class="td sum" style="left:715px;top:839px;width:135px;text-align:right"><span class="n">105</span>人</div>
<div class="td sum" style="left:866px;top:839px;width:115px;text-align:right"><span class="n">47</span>人</div>
<div class="td sum" style="left:997px;top:839px;width:115px;text-align:right"><span class="n">6</span>人</div>
<div class="abs" style="left:1775px;top:328px;width:14px;height:511px;background:linear-gradient(90deg,rgba(0,0,0,0),rgba(0,0,0,.05))"></div>


<!-- scrollbars -->
<div class="abs" style="left:1878px;top:328px;width:10px;height:542px;background:#fff"></div>
<div class="abs" style="left:1881px;top:329px;width:6px;height:540px;border-radius:3px;background:#dadcdf"></div>
<div class="abs" style="left:1881px;top:329px;width:6px;height:524px;border-radius:3px;background:#a9abb0"></div>
<div class="vline" style="left:1832px;top:838px;height:32px"></div>
<div class="abs" style="left:272px;top:870px;width:1608px;height:5px;border-radius:3px;background:#d8dadd"></div>
<div class="abs" style="left:273px;top:870px;width:1564px;height:5px;border-radius:3px;background:#a9abb0"></div>
<div class="abs" style="left:272px;top:888px;line-height:16px;color:#505363;white-space:nowrap">共 <span style="color:#3d87e6">30</span> 条</div>
<!-- pagination -->
<div class="pg" style="left:1471px"><svg class="abs" style="left:11px;top:10px" width="9" height="12" viewBox="0 0 9 12" fill="none" stroke="#c0c4cc" stroke-width="1.3"><path d="M6.5 1.5L2 6l4.5 4.5"/></svg></div>
<div class="pg" style="left:1511px;background:#1e78f5;border-color:#1e78f5;color:#fff">1</div>
<div class="pg" style="left:1551px">2</div>
<div class="pg" style="left:1591px">3</div>
<div class="pg" style="left:1631px"><svg class="abs" style="left:12px;top:10px" width="9" height="12" viewBox="0 0 9 12" fill="none" stroke="#606266" stroke-width="1.3"><path d="M2.5 1.5L7 6l-4.5 4.5"/></svg></div>
<div class="pg" style="left:1680px;width:88px;text-align:left;padding-left:8px">10条/页<svg class="abs" style="left:65px;top:12px" width="10" height="7" viewBox="0 0 10 7" fill="none" stroke="#a8abb2" stroke-width="1.2"><path d="M1 1l4 4.5L9 1"/></svg></div>
<div class="abs" style="left:1776px;top:886px;line-height:20px;color:#505363">跳至</div>
<div class="pg" style="left:1813px;width:52px"></div>
<div class="abs" style="left:1875px;top:886px;line-height:20px;color:#505363">页</div>
<div class="abs wm" style="left:1535px;top:890px;letter-spacing:-.3px">掘金技术社区 @ 中杯可乐多加冰</div>
</body></html>
